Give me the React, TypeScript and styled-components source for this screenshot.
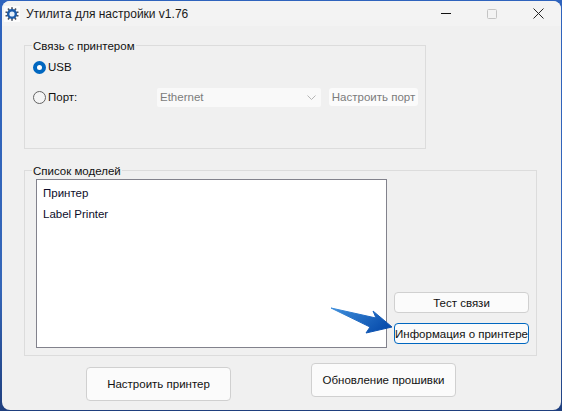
import React from "react";
import styled, { createGlobalStyle } from "styled-components";

const Global = createGlobalStyle`
  html, body { margin: 0; padding: 0; width: 562px; height: 411px; overflow: hidden; }
  body {
    font-family: "Liberation Sans", Roboto, sans-serif;
    font-size: 11.5px;
    color: #101010;
  }
`;

const Desktop = styled.div`
  width: 562px;
  height: 411px;
  padding: 1px 1px 1px 2px;
  box-sizing: border-box;
  background: linear-gradient(180deg, #2e63bd 0%, #3566b8 70%, #1f3f7e 100%);
`;

const Win = styled.div`
  width: 559px;
  height: 409px;
  background: #f0f0f0;
  border-radius: 8px;
  overflow: hidden;
  position: relative;
`;

const TitleBar = styled.div`
  height: 25px;
  background: #f3f3f3;
  display: flex;
  align-items: center;
  padding-left: 2px;
  font-size: 12px;
`;

const Title = styled.span`
  margin-left: 6px;
  color: #1a1a1a;
  white-space: nowrap;
`;

const Caption = styled.div`
  margin-left: auto;
  display: flex;
  height: 25px;
  align-items: center;
`;

const CaptionBtn = styled.div`
  width: 46px;
  height: 25px;
  display: flex;
  align-items: center;
  justify-content: center;
`;

const Content = styled.div`
  padding: 19px 0 0 22px;
`;

const Group = styled.fieldset<{ $w: number; $h: number }>`
  width: ${(p) => p.$w}px;
  height: ${(p) => p.$h}px;
  box-sizing: border-box;
  margin: 0;
  padding: 0;
  border: 1px solid #dcdcdc;
  position: relative;
`;

const Legend = styled.span`
  position: absolute;
  top: -7px;
  left: 7px;
  padding: 0 1px;
  background: #f0f0f0;
  line-height: 14px;
  white-space: nowrap;
`;

const ConnBody = styled.div`
  display: flex;
  flex-direction: column;
  padding: 8px 0 0 8px;
`;

const ConnRow = styled.div<{ $h: number }>`
  display: flex;
  align-items: center;
  height: ${(p) => p.$h}px;
`;

const Radio = styled.span<{ $on?: boolean }>`
  width: 13px;
  height: 13px;
  border-radius: 50%;
  box-sizing: border-box;
  flex: none;
  border: ${(p) => (p.$on ? "4px solid #0067c0" : "1px solid #636363")};
  background: ${(p) => (p.$on ? "#fff" : "#f4f4f4")};
`;

const RadioLabel = styled.span`
  margin-left: 2px;
  width: 109px;
  white-space: nowrap;
`;

const Combo = styled.div`
  width: 164px;
  height: 19px;
  background: #f9f9f9;
  border-radius: 2px;
  display: flex;
  align-items: center;
  justify-content: space-between;
  padding: 0 5px 0 3px;
  box-sizing: border-box;
  color: #7c7c7c;
`;

const GhostBtn = styled.div`
  width: 89px;
  height: 18px;
  margin-left: 8px;
  box-sizing: border-box;
  background: #fbfbfb;
  border-radius: 3px;
  color: #7c7c7c;
  display: flex;
  align-items: center;
  justify-content: center;
  white-space: nowrap;
`;

const ModelsGroup = styled(Group)`
  margin-top: 21px;
  display: flex;
  padding: 8px 7px 6px 11px;
`;

const ListBox = styled.div`
  width: 351px;
  height: 169px;
  box-sizing: border-box;
  border: 1px solid #82828c;
  background: #fff;
  padding: 3px 0 0 6px;
  color: #0d0d2a;
`;

const ListItem = styled.div`
  height: 21px;
  line-height: 21px;
  white-space: nowrap;
`;

const SideButtons = styled.div`
  margin-left: 7px;
  padding-top: 113px;
  display: flex;
  flex-direction: column;
  gap: 10px;
`;

const Btn = styled.div<{ $focus?: boolean }>`
  width: 135px;
  height: 21px;
  box-sizing: border-box;
  background: #fbfbfb;
  border: 1px solid ${(p) => (p.$focus ? "#0067c0" : "#d0d0d0")};
  border-radius: 4px;
  display: flex;
  align-items: center;
  justify-content: center;
  white-space: nowrap;
  color: #111;
`;

const BottomRow = styled.div`
  display: flex;
  padding-left: 62px;
  gap: 80px;
`;

const BigBtn = styled(Btn)<{ $top: number }>`
  width: 145px;
  height: 34px;
  margin-top: ${(p) => p.$top}px;
`;

const ArrowSvg = styled.svg`
  position: absolute;
  left: 327px;
  top: 303px;
  pointer-events: none;
`;

function Gear() {
  const teeth = Array.from({ length: 10 }, (_, i) => i * 36);
  return (
    <svg width="16" height="16" viewBox="0 0 16 16">
      <rect width="16" height="16" fill="#fcfcfc" />
      {teeth.map((a) => (
        <rect key={a} x="7.2" y="1.2" width="1.6" height="3" fill="#4a5260" transform={`rotate(${a} 8 8)`} />
      ))}
      <circle cx="8" cy="8" r="5" fill="#1c5cab" />
      <circle cx="8" cy="8" r="2.6" fill="#e6f0fa" />
    </svg>
  );
}

export default function App() {
  return (
    <>
      <Global />
      <Desktop>
        <Win>
          <TitleBar>
            <Gear />
            <Title>Утилита для настройки v1.76</Title>
            <Caption>
              <CaptionBtn>
                <svg width="10" height="2" viewBox="0 0 10 2"><path d="M0 .5h10" stroke="#111" /></svg>
              </CaptionBtn>
              <CaptionBtn>
                <svg width="10" height="10" viewBox="0 0 10 10"><rect x=".5" y=".5" width="9" height="9" rx="1" fill="none" stroke="#c4c4c4" /></svg>
              </CaptionBtn>
              <CaptionBtn>
                <svg width="11" height="11" viewBox="0 0 11 11"><path d="M.5.5l10 10M10.5.5l-10 10" stroke="#222" /></svg>
              </CaptionBtn>
            </Caption>
          </TitleBar>
          <Content>
            <Group $w={402} $h={104}>
              <Legend>Связь с принтером</Legend>
              <ConnBody>
                <ConnRow $h={26}>
                  <Radio $on />
                  <RadioLabel>USB</RadioLabel>
                </ConnRow>
                <ConnRow $h={34}>
                  <Radio />
                  <RadioLabel>Порт:</RadioLabel>
                  <Combo>
                    <span>Ethernet</span>
                    <svg width="9" height="5" viewBox="0 0 9 5"><path d="M.5.5l4 4 4-4" fill="none" stroke="#b5b5b5" /></svg>
                  </Combo>
                  <GhostBtn>Настроить порт</GhostBtn>
                </ConnRow>
              </ConnBody>
            </Group>
            <ModelsGroup $w={512} $h={186}>
              <Legend>Список моделей</Legend>
              <ListBox>
                <ListItem>Принтер</ListItem>
                <ListItem>Label Printer</ListItem>
              </ListBox>
              <SideButtons>
                <Btn>Тест связи</Btn>
                <Btn $focus>Информация о принтере</Btn>
              </SideButtons>
            </ModelsGroup>
            <BottomRow>
              <BigBtn $top={11}>Настроить принтер</BigBtn>
              <BigBtn $top={7}>Обновление прошивки</BigBtn>
            </BottomRow>
          </Content>
          <ArrowSvg width="70" height="36" viewBox="0 0 70 36">
            <defs>
              <linearGradient id="ar" x1="0" y1="0" x2="1" y2="0.5">
                <stop offset="0" stopColor="#3f8fdc" />
                <stop offset="1" stopColor="#0a4fae" />
              </linearGradient>
            </defs>
            <path
              d="M2 4 L47 14 L44 7 L63 23 L37 29 L41 23 Z"
              fill="url(#ar)"
              stroke="url(#ar)"
              strokeLinejoin="round"
            />
          </ArrowSvg>
        </Win>
      </Desktop>
    </>
  );
}
